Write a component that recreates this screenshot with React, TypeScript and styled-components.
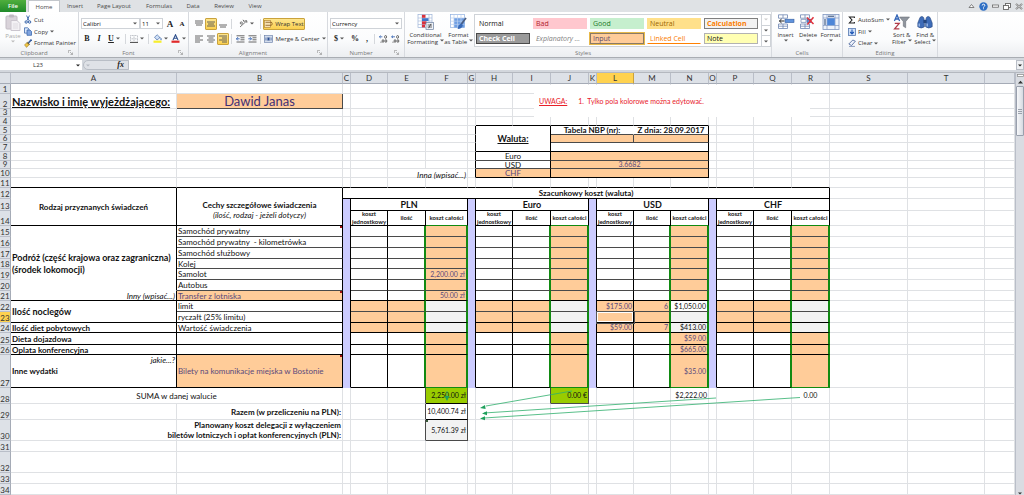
import React from "react";
import styled, { createGlobalStyle, css } from "styled-components";

const GlobalStyle = createGlobalStyle`
  * { box-sizing: border-box; }
  body { margin: 0; background: #fff; }
  button, input, select { font: inherit; color: inherit; margin: 0; padding: 0; border: 0; background: none; border-radius: 0; }
  select { appearance: none; outline: none; }
`;

const Page = styled.div`
  display: flex;
  flex-direction: column;
  min-height: 100vh;
  overflow: hidden;
  font-family: "Open Sans", "Noto Sans", sans-serif;
  font-size: 6px;
  line-height: 8px;
  color: #333;
`;

/* ---------- tab strip ---------- */

const TabStrip = styled.nav`
  display: flex;
  align-items: stretch;
  height: 12px;
  background: #dfe2e5;
`;

const Tab = styled.button<{ $w: number; $kind?: "file" | "active" }>`
  width: ${(p) => p.$w}px;
  text-align: center;
  color: #4a4a4a;
  ${(p) => p.$kind === "file" && css`
    background: linear-gradient(#4fae3d, #1f8a2a);
    color: #fff;
    font-weight: 600;
    margin-right: 2px;
  `}
  ${(p) => p.$kind === "active" && css`
    background: #fff;
    border: 1px solid #c3c7cc;
    border-bottom: 0;
  `}
`;

const WindowButtons = styled.div`
  display: flex;
  align-items: center;
  gap: 2px;
  margin-left: auto;
`;

const WindowButton = styled.button`
  width: 10px;
  height: 10px;
  display: grid;
  place-items: center;
`;

/* ---------- ribbon ---------- */

const Ribbon = styled.div`
  display: flex;
  height: 46px;
  background: linear-gradient(#fff, #fbfcfd 60%, #eceef1);
  border-bottom: 1px solid #a9adb3;
`;

const Group = styled.section<{ $w: number }>`
  display: flex;
  flex-direction: column;
  width: ${(p) => p.$w}px;
  flex: none;
  border-right: 1px solid #d7dadf;
`;

const GroupBody = styled.div<{ $inset?: number }>`
  display: flex;
  height: 37px;
  padding: 2px 0 0 ${(p) => p.$inset ?? 2}px;
`;

const GroupLabel = styled.div`
  display: grid;
  grid-template-columns: 1fr 10px;
  height: 8px;
  text-align: center;
  color: #777;
  svg { margin-top: 1px; }
`;

const Stack = styled.div<{ $pt?: number }>`
  display: flex;
  flex-direction: column;
  padding-top: ${(p) => p.$pt ?? 0}px;
`;

const ToolRow = styled.div`
  display: flex;
  align-items: center;
  height: 15px;
`;

const BigButton = styled.button<{ $w: number; $off?: boolean }>`
  width: ${(p) => p.$w}px;
  display: flex;
  flex-direction: column;
  align-items: center;
  line-height: 7px;
  white-space: nowrap;
  color: ${(p) => (p.$off ? "#aaa" : "#333")};
  svg { flex: none; margin-bottom: 2px; }
`;

const SmallButton = styled.button`
  display: flex;
  align-items: center;
  gap: 2px;
  height: 12px;
  white-space: nowrap;
`;

const Tool = styled.button<{ $w?: number; $on?: boolean }>`
  display: flex;
  align-items: center;
  justify-content: center;
  gap: 2px;
  width: ${(p) => p.$w ?? 12}px;
  height: 12px;
  white-space: nowrap;
  ${(p) => p.$on && css`
    background: linear-gradient(#fde58d, #fbd04f);
    border: 1px solid #c9a23c;
    border-radius: 1px;
  `}
`;

const Glyph = styled.span<{ $size?: number; $i?: boolean; $u?: boolean }>`
  font-family: "Liberation Serif", serif;
  font-size: ${(p) => p.$size ?? 8}px;
  font-weight: bold;
  color: #222;
  font-style: ${(p) => (p.$i ? "italic" : "normal")};
  text-decoration: ${(p) => (p.$u ? "underline" : "none")};
`;

const Sep = styled.i`
  width: 1px;
  height: 10px;
  margin: 0 2px;
  background: #d5d8dc;
`;

const Combo = styled.label<{ $w: number }>`
  display: flex;
  align-items: center;
  width: ${(p) => p.$w}px;
  height: 11px;
  padding: 0 2px 0 1px;
  border: 1px solid #cfd3d8;
  background: #fff;
  color: #111;
  select { flex: 1; min-width: 0; }
`;

const Gallery = styled.div`
  display: grid;
  grid-template-columns: repeat(5, 54px) 9px;
  grid-template-rows: 13px 13px;
  column-gap: 3px;
  row-gap: 2px;
  height: 33px;
  margin-left: 1px;
  padding: 2px 0 0 1px;
  border: 1px solid #cfd3d8;
  background: #fff;
  font-size: 7px;
  line-height: 9px;
`;

const StyleChip = styled.button<{ $bg: string; $fg: string; $bd?: string; $i?: boolean; $b?: boolean; $picked?: boolean; $under?: boolean }>`
  margin: 1px 0;
  padding: 0 2px;
  text-align: left;
  white-space: nowrap;
  background: ${(p) => p.$bg};
  color: ${(p) => p.$fg};
  border: 1px solid ${(p) => p.$bd ?? "transparent"};
  font-style: ${(p) => (p.$i ? "italic" : "normal")};
  font-weight: ${(p) => (p.$b ? "bold" : "normal")};
  ${(p) => p.$picked && css`box-shadow: 0 0 0 1px #e8b94a;`}
  ${(p) => p.$under && css`border-bottom: 1px solid #ff8001;`}
`;

const GalleryScroll = styled.div`
  grid-row: 1 / span 2;
  grid-column: 6;
  display: flex;
  flex-direction: column;
  margin: -2px 0 0;
  height: 31px;
  border-left: 1px solid #cfd3d8;
`;

const GalleryArrow = styled.button`
  flex: 1;
  display: grid;
  place-items: center;
  & + & { border-top: 1px solid #cfd3d8; }
`;

/* ---------- formula bar ---------- */

const FormulaBar = styled.div`
  display: flex;
  height: 15px;
  padding: 2px 0;
  background: #d3d7dd;
  border-bottom: 1px solid #b4b8bf;
`;

const NameBox = styled.label`
  display: flex;
  align-items: center;
  width: 82px;
  padding-right: 2px;
  background: #fff;
  input { flex: 1; min-width: 0; text-align: center; }
`;

const FxArea = styled.div`
  display: flex;
  align-items: center;
  justify-content: space-between;
  width: 46px;
  margin-left: 1px;
  padding: 0 4px 0 2px;
  border: 1px solid #b9bec6;
  border-radius: 6px 0 0 6px;
  background: #dfe2e7;
`;

const FormulaInput = styled.input`
  && { flex: 1; min-width: 0; background: #fff; }
`;

const ExpandButton = styled.button`
  && { width: 8px; background: #eef0f3; border: 1px solid #b9bec6; }
  display: grid;
  place-items: center;
`;

/* ---------- sheet ---------- */

const Workspace = styled.main`
  display: flex;
  flex: 1;
`;

const SheetArea = styled.div`
  position: relative;
  flex: 1;
  min-width: 0;
`;

const COLS = [166, 166, 8, 37, 38, 42, 8, 37, 38, 38, 8, 37, 37, 38, 8, 37, 38, 38, 78, 77];
const LETTERS = "ABCDEFGHIJKLMNOPQRST";
const HEIGHTS = [
  10, 15, 8, 9, 9, 8, 9, 9, 8, 9, 10, 11, 12, 15, 11, 11, 11, 10, 11, 11, 10, 11, 11, 10, 12, 10, 33, 16, 16, 21, 11,
  21, 11, 11,
];

const Table = styled.table`
  display: grid;
  grid-template-columns: 11px ${COLS.map((c) => c + "px").join(" ")} minmax(0, 1fr);
  grid-template-rows: 11px ${HEIGHTS.map((h) => h + "px").join(" ")};
  font-family: Lato, "Noto Sans", sans-serif;
  font-size: 8px;
  line-height: 10px;
  color: #111;
  thead, tbody, tr { display: contents; }
`;

const ColHead = styled.th<{ $on?: boolean }>`
  padding: 0;
  font-weight: normal;
  text-align: center;
  color: #333;
  background: ${(p) => (p.$on ? "#ffd24f" : "#dde1e7")};
  border-right: 1px solid ${(p) => (p.$on ? "#c9a23c" : "#b9bec8")};
  border-bottom: 1px solid #a5abb6;
`;

const RowHead = styled.th<{ $on?: boolean }>`
  display: flex;
  align-items: flex-end;
  justify-content: center;
  padding: 0;
  font-weight: normal;
  line-height: 8px;
  color: #333;
  background: ${(p) => (p.$on ? "#ffd24f" : "#dde1e7")};
  border-right: 1px solid #a5abb6;
  border-bottom: 1px solid #b9bec8;
`;

const LINE = { grid: "#dfe1e4", thin: "#4a4a4a", black: "#000", green: "#128a12", none: "transparent" };
const FILL = { peach: "#ffcc99", gray: "#f2f2f2", lime: "#99cc00", lilac: "#ccccff", white: "#fff" };
type Line = keyof typeof LINE;
type Fill = keyof typeof FILL;

interface CellStyle {
  fill?: Fill;
  r?: Line;
  b?: Line;
  align?: "left" | "center" | "right";
  valign?: "top" | "center" | "bottom";
  bold?: boolean;
  italic?: boolean;
  underline?: boolean;
  ink?: string;
  size?: number;
  mark?: string;
  picked?: boolean;
  over?: boolean;
  drop?: number;
}
interface CellData extends CellStyle {
  cs?: number;
  rs?: number;
  text?: React.ReactNode;
}

const FLEX = { left: "flex-start", center: "center", right: "flex-end", top: "flex-start", bottom: "flex-end" };
const thick = (l?: Line) => (l === "green" ? 2 : 1);

const Cell = styled.td<{ $s: CellStyle; $cs: number; $rs: number }>`
  position: relative;
  display: flex;
  grid-column: span ${(p) => p.$cs};
  grid-row: span ${(p) => p.$rs};
  justify-content: ${(p) => FLEX[p.$s.align ?? "left"]};
  align-items: ${(p) => FLEX[p.$s.valign ?? "center"]};
  text-align: ${(p) => p.$s.align ?? "left"};
  min-width: 0;
  padding: ${(p) => p.$s.drop ?? 0}px 1px 0;
  white-space: pre;
  background: ${(p) => FILL[p.$s.fill ?? "white"]};
  border-right: ${(p) => thick(p.$s.r)}px solid ${(p) => LINE[p.$s.r ?? "grid"]};
  border-bottom: 1px solid ${(p) => LINE[p.$s.b ?? "grid"]};
  font-size: ${(p) => p.$s.size ?? 8}px;
  line-height: ${(p) => (p.$s.size ?? 8) + 2}px;
  font-weight: ${(p) => (p.$s.bold ? "bold" : "normal")};
  font-style: ${(p) => (p.$s.italic ? "italic" : "normal")};
  text-decoration: ${(p) => (p.$s.underline ? "underline" : "none")};
  color: ${(p) => p.$s.ink ?? "#111"};
  ${(p) => p.$s.over && css`z-index: 1;`}
  ${(p) => p.$s.mark && css`
    &::after {
      content: "";
      position: absolute;
      top: 0;
      ${p.$s.align === "right" ? "left" : "right"}: 0;
      border: 1px solid ${p.$s.mark};
    }
  `}
  ${(p) => p.$s.picked && css`
    box-shadow: inset 0 0 0 1px #fff, 0 0 0 1px #555;
    z-index: 1;
  `}
`;

const Lines = styled.div<{ $lh: number }>`
  line-height: ${(p) => p.$lh}px;
`;

const Aside = styled.span`
  align-self: flex-start;
  margin-left: auto;
  font-weight: normal;
  font-style: italic;
`;

const Note = styled.aside`
  position: absolute;
  left: 534px;
  top: 12px;
  width: 276px;
  height: 32px;
  padding: 11px 5px 0;
  display: flex;
  gap: 11px;
  background: #fff;
  color: #e8202a;
  font-family: Lato, "Noto Sans", sans-serif;
  font-size: 7px;
  line-height: 10px;
  white-space: nowrap;
`;

const Arrows = styled.svg`
  position: absolute;
  left: 0;
  top: 0;
  z-index: 2;
  pointer-events: none;
`;

const Scrollbar = styled.div`
  display: flex;
  flex-direction: column;
  width: 9px;
  background: #d9dce2;
  border-left: 1px solid #b9bec8;
`;

const ScrollButton = styled.button<{ $h: number }>`
  height: ${(p) => p.$h}px;
  flex: none;
  display: grid;
  place-items: center;
`;

const ScrollThumb = styled.div`
  height: 50px;
  flex: none;
  display: grid;
  place-items: center;
  margin-bottom: auto;
  border: 1px solid #99a0ad;
  border-radius: 1px;
  background: linear-gradient(90deg, #f7f8fa, #d6dae1);
`;

/* ---------- icons ---------- */

const Caret = ({ c = "#555" }: { c?: string }) => (
  <svg width="4" height="3" viewBox="0 0 4 3"><path d="M0 0.5h4l-2 2z" fill={c} /></svg>
);
const Launcher = () => (
  <svg width="5" height="5" viewBox="0 0 5 5" fill="none" stroke="#999" strokeWidth="0.7"><path d="M0.4 3V0.4H3M2 2l2.4 2.4M4.5 2.5v2h-2" /></svg>
);
const CutIcon = () => (
  <svg width="8" height="9" viewBox="0 0 8 9" fill="none" stroke="#3562a8"><path d="M2.6 0.5l2.2 5M5.4 0.5l-2.2 5" strokeWidth="0.9" /><circle cx="2.2" cy="7" r="1.2" /><circle cx="5.6" cy="7" r="1.2" /></svg>
);
const CopyIcon = () => (
  <svg width="8" height="9" viewBox="0 0 8 9" stroke="#3d69ad" strokeWidth="0.8"><path d="M0.5 0.8h3.2l1.3 1.3v4H0.5z" fill="#dce8fa" /><path d="M3 3h3l1.5 1.5v3.8H3z" fill="#7fa4e0" /></svg>
);
const BrushIcon = () => (
  <svg width="8" height="9" viewBox="0 0 8 9"><path d="M7.5 0.5L4.2 4.2" stroke="#3b5f9e" strokeWidth="1.6" /><path d="M0.5 5.8L3.6 3.2 5.4 5.4 2.5 8.4z" fill="#f2c744" stroke="#8a6c1c" strokeWidth="0.5" /><path d="M3.2 3.6l2 2" stroke="#333" /></svg>
);
const PasteIcon = () => (
  <svg width="16" height="17" viewBox="0 0 16 17"><rect x="1" y="2" width="11" height="13" rx="1" fill="#d9d3da" stroke="#c2bcc4" /><rect x="4" y="0.5" width="5" height="3" rx="1" fill="#bdb8c0" /><path d="M6 6.5h6l3 3v7H6z" fill="#f3f1f5" stroke="#cbc6cf" /><path d="M8 10h5M8 12h5M8 14h5" stroke="#d6d1da" strokeWidth="0.7" /></svg>
);
const AlignIcon = ({ lines }: { lines: [number, number, number][] }) => (
  <svg width="8" height="8" viewBox="0 0 8 8" stroke="#555" strokeWidth="0.9">{lines.map(([x, l, y], i) => <path key={i} d={`M${x} ${y}h${l}`} />)}</svg>
);
const BordersIcon = () => (
  <svg width="8" height="8" viewBox="0 0 8 8" fill="none"><path d="M0.5 0.5h7v6M0.5 0.5v6M4 0.5v6M0.5 3.8h7" stroke="#a9adb5" strokeWidth="0.7" strokeDasharray="1 0.5" /><path d="M0 7.4h8" stroke="#444" /></svg>
);
const FillIcon = () => (
  <svg width="9" height="9" viewBox="0 0 9 9"><path d="M1.5 3.2L4.2 0.8 7 3.6 4 6z" fill="#cfe0f7" stroke="#4a6fa8" strokeWidth="0.7" /><path d="M7 3.4q1.6 1 1 2.8" stroke="#3562a8" fill="none" /><rect x="0.5" y="6.6" width="8" height="2.2" fill="#f7ee2e" /></svg>
);
const InkIcon = () => (
  <svg width="9" height="9" viewBox="0 0 9 9"><path d="M2 6L4.5 0.8 7 6M3 4.2h3" stroke="#2c4e8c" strokeWidth="1.1" fill="none" /><rect x="0.5" y="6.6" width="8" height="2.2" fill="#e02a2a" /></svg>
);
const OrientIcon = () => (
  <svg width="9" height="9" viewBox="0 0 9 9" fill="none" stroke="#555"><path d="M1 8L7.6 2M5.6 1.8h2.2v2" strokeWidth="0.8" /><circle cx="2.3" cy="4" r="1.1" strokeWidth="0.8" /><path d="M4 0.8L5.4 3" strokeWidth="0.9" /></svg>
);
const IndentIcon = ({ flip }: { flip?: boolean }) => (
  <svg width="9" height="8" viewBox="0 0 9 8" fill="none"><path d="M0.5 0.8h8M4.5 2.8h4M4.5 4.8h4M0.5 7h8" stroke="#555" strokeWidth="0.9" /><path d={flip ? "M0.3 3.8h3M2 2.2l1.6 1.6L2 5.4" : "M3.6 3.8h-3M1.9 2.2L0.3 3.8l1.6 1.6"} stroke="#2f5fb0" strokeWidth="0.9" /></svg>
);
const WrapIcon = () => (
  <svg width="9" height="8" viewBox="0 0 9 8" fill="none"><rect x="0.5" y="0.5" width="6" height="7" fill="#f7e3b2" stroke="#b58a3c" strokeWidth="0.7" /><path d="M1.5 2.3h6M1.5 5.3h5.5q1.2 0 1.2-1.5T7 2.4" stroke="#8a5a20" strokeWidth="0.8" /></svg>
);
const MergeIcon = () => (
  <svg width="9" height="8" viewBox="0 0 9 8"><rect x="0.5" y="0.5" width="8" height="7" fill="#e9f0fb" stroke="#7186ad" strokeWidth="0.7" /><path d="M0.5 2.2h8M0.5 5.8h8" stroke="#7186ad" strokeWidth="0.6" /><rect x="3.4" y="2.6" width="2.2" height="2.8" fill="#2a4d8f" /><path d="M0.9 4h2M6.2 4h2" stroke="#2a4d8f" strokeWidth="0.9" /></svg>
);
const DecimalIcon = ({ less }: { less?: boolean }) => (
  <svg width="9" height="8" viewBox="0 0 9 8" fill="none"><path d={less ? "M4 1.8H0.6M2 0.6L0.6 1.8 2 3" : "M0.4 1.8h3M1.7 0.6L0.4 1.8 1.7 3"} stroke="#2f5fb0" strokeWidth="0.8" /><ellipse cx="6.6" cy="1.9" rx="1" ry="1.4" stroke="#333" strokeWidth="0.7" /><ellipse cx="4" cy="6" rx="0.9" ry="1.4" stroke="#333" strokeWidth="0.7" /><ellipse cx="6.9" cy="6" rx="0.9" ry="1.4" stroke="#333" strokeWidth="0.7" /><path d="M1.6 7.2h0.8" stroke="#333" /></svg>
);
const CondIcon = () => (
  <svg width="17" height="16" viewBox="0 0 17 16"><rect x="1" y="0.5" width="14" height="13" fill="#fff" stroke="#9db4d8" strokeWidth="0.7" /><path d="M1 4h14M1 7h14M1 10.5h14M5 0.5v13M12 0.5v13" stroke="#9db4d8" strokeWidth="0.6" /><rect x="5" y="0.8" width="3.5" height="3" fill="#d8323e" /><rect x="5" y="4.2" width="6.5" height="2.8" fill="#3f74c8" /><rect x="5" y="7.3" width="4.5" height="3" fill="#d8323e" /><rect x="5" y="10.6" width="3" height="2.8" fill="#d8323e" /><rect x="9" y="8.5" width="7.5" height="7" fill="#eef2f8" stroke="#6c7f9e" strokeWidth="0.7" /><path d="M10.6 11h4.4M10.6 13h4.4M14 9.8l-2.4 4.4" stroke="#333" strokeWidth="0.7" /></svg>
);
const TableIcon = () => (
  <svg width="17" height="16" viewBox="0 0 17 16"><rect x="0.5" y="0.5" width="14" height="13" fill="#fff" stroke="#8fb0e0" strokeWidth="0.7" /><rect x="4" y="4" width="10.5" height="9.5" fill="#6f9fe3" /><path d="M0.5 4h14M0.5 7.2h14M0.5 10.4h14M4 0.5v13M7.5 0.5v13M11 0.5v13" stroke="#b9cfee" strokeWidth="0.7" /><path d="M16 4l-5 6.5" stroke="#4a5d80" strokeWidth="1.7" /><path d="M11.6 9.6q-3 0.5-4 5.4 4.6 0 5.2-4z" fill="#3768b5" /></svg>
);
const CellsIcon = ({ kind }: { kind: "insert" | "delete" | "format" }) => (
  <svg width="18" height="16" viewBox="0 0 18 16" fill="none">
    {kind === "format" ? (
      <><rect x="1" y="0.5" width="16" height="15" fill="#eef3fb" stroke="#8197c0" strokeWidth="0.8" /><path d="M1 4h16M1 11.5h16M5 0.5v15M13 0.5v15" stroke="#8197c0" strokeWidth="0.7" /><rect x="5.2" y="4.2" width="7.6" height="7" fill="#4d86d8" /><path d="M6 2.2h6M3 5v6" stroke="#26436f" /></>
    ) : (
      <><path d="M1.5 0.8h9v3.4h-9zM6 0.8v3.4M1.5 10h9v4.5h-9zM6 10v4.5M1.5 12.2h9" stroke="#6f86b3" strokeWidth="0.8" fill="#fff" /><rect x="8" y="5.2" width={kind === "insert" ? 9 : 4} height="3.4" fill="#5e92dc" stroke="#375f9f" strokeWidth="0.6" />
        {kind === "insert" ? <path d="M7.4 7H2.4M4.6 5L2.4 7l2.2 2" stroke="#222" /> : <><path d="M2 5.4h5v3H2z" stroke="#6f86b3" strokeWidth="0.7" /><path d="M8 3.5l6.5 6.5M14.5 3.2L8.4 10.4" stroke="#e0303a" strokeWidth="1.5" /></>}</>
    )}
  </svg>
);
const SigmaIcon = () => <svg width="8" height="8" viewBox="0 0 8 8" fill="none"><path d="M6.4 2V1H1.4l2.6 3-2.6 3h5V6" stroke="#222" strokeWidth="1.1" /></svg>;
const FillDownIcon = () => <svg width="8" height="8" viewBox="0 0 8 8" fill="none"><rect x="0.5" y="0.5" width="7" height="7" fill="#cfe0f8" stroke="#5578b0" strokeWidth="0.8" /><path d="M4 1.5v4.2M2.2 4L4 5.9 5.8 4" stroke="#1d55b5" strokeWidth="1.1" /></svg>;
const EraserIcon = () => <svg width="8" height="8" viewBox="0 0 8 8"><path d="M0.8 5L4.8 1l2.6 1.2-3.8 4.3z" fill="#eef2fb" stroke="#48639a" strokeWidth="0.8" /><path d="M1 7.4h6" stroke="#48639a" strokeWidth="0.6" /></svg>;
const SortIcon = () => (
  <svg width="17" height="16" viewBox="0 0 17 16" fill="none"><path d="M1.4 7L4 1l2.6 6M2.2 5h3.6" stroke="#2f62b5" strokeWidth="1.3" /><path d="M1.8 9.3h4.4l-4.6 5.5h4.8" stroke="#b03a48" strokeWidth="1.3" /><path d="M6.5 3h10l-3.8 4.6v6.2l-2.4-1.6V7.6z" fill="#8f959e" stroke="#5c626b" strokeWidth="0.5" /></svg>
);
const FindIcon = () => (
  <svg width="16" height="16" viewBox="0 0 16 16"><path d="M3 3.4q2-2 3.6 0l0.8 3v6.4q-3 2.4-6.6 0V9zM13 3.4q-2-2-3.6 0l-0.8 3v6.4q3 2.4 6.6 0V9z" fill="#3e6cb8" stroke="#26477f" strokeWidth="0.6" /><rect x="6.4" y="6" width="3.2" height="3" fill="#26477f" /><path d="M2.2 9.4v3M10.2 9.4v3" stroke="#a8c3ec" strokeWidth="1.2" /></svg>
);

/* ---------- sheet data ---------- */

const INPUT_INK = "#5a4a7c";
const COMMENT = "#a01010";
const NUM = 7;
const cells: Record<string, CellData> = {};
const put = (ref: string, data: CellData) => { cells[ref] = { ...cells[ref], ...data }; };

put("A2", { text: "Nazwisko i imię wyjeżdżającego:", bold: true, underline: true, size: 11 });
put("B2", { text: "Dawid Janas", fill: "peach", align: "center", size: 13, ink: "#3f2f76", r: "thin", b: "thin" });
for (const c of "ABCDEFGHIJKLMNOPQR") put(c + 11, { b: "black" });

put("E10", { cs: 2, text: "Inna (wpisać...)", italic: true, align: "right", valign: "top", over: true, drop: 1 });
for (const c of "HIJKLMN") put(c + 4, { b: "black" });
for (const r of [5, 6, 7, 8, 9, 10]) put("G" + r, { r: "black" });
put("H5", { cs: 2, rs: 3, text: "Waluta:", bold: true, underline: true, align: "center", size: 9, r: "black", b: "black" });
put("H8", { cs: 2, text: "Euro", align: "center", r: "black", b: "thin" });
put("H9", { cs: 2, text: "USD", align: "center", r: "black", b: "thin" });
put("H10", { cs: 2, text: "CHF", align: "center", fill: "peach", ink: INPUT_INK, r: "black", b: "black" });
put("J5", { cs: 3, text: "Tabela NBP (nr):", bold: true, align: "center", r: "none", b: "thin" });
put("M5", { cs: 2, text: "Z dnia: 28.09.2017", bold: true, align: "center", r: "black", b: "thin" });
put("J6", { cs: 3, fill: "peach", r: "thin", b: "thin" });
put("M6", { cs: 2, fill: "peach", r: "black", b: "thin" });
put("J7", { cs: 5, r: "black", b: "black" });
put("J8", { cs: 5, fill: "peach", r: "black", b: "thin" });
put("J9", { cs: 5, fill: "peach", r: "black", b: "thin", align: "center", ink: INPUT_INK, size: NUM, text: "3.6682" });
put("J10", { cs: 5, fill: "peach", r: "black", b: "black" });

put("A12", { rs: 3, text: "Rodzaj przyznanych świadczeń", bold: true, align: "center", r: "black", b: "black" });
put("B12", {
  rs: 3, bold: true, align: "center", r: "black", b: "black", drop: 6,
  text: <div>Cechy szczegółowe świadczenia<br /><Aside>(ilość, rodzaj - jeżeli dotyczy)</Aside></div>,
});
put("C12", { cs: 16, text: "Szacunkowy koszt (waluta)", bold: true, align: "center", r: "black", b: "black" });
for (const c of "CGKO") put(c + 13, { rs: 15, fill: "lilac", r: "black", b: "none" });

const blocks: [string, string][] = [["DEF", "PLN"], ["HIJ", "Euro"], ["LMN", "USD"], ["PQR", "CHF"]];
for (const [[u, q, t], name] of blocks) {
  put(u + 13, { cs: 3, text: name, bold: true, align: "center", size: 9, r: "black", b: "black" });
  put(u + 14, { text: <Lines $lh={8}>{"koszt\njednostkowy"}</Lines>, bold: true, size: 6, align: "center", r: "black", b: "black" });
  put(q + 14, { text: "ilość", bold: true, size: 6, align: "center", r: "black", b: "black" });
  put(t + 14, { text: "koszt całości", bold: true, size: 6, align: "center", r: "black", b: "green" });
  for (let r = 15; r <= 27; r++) {
    const b: Line = r >= 21 && r !== 22 ? "black" : "thin";
    const open = r >= 22 && r <= 24;
    const base: CellData = { align: "right", ink: INPUT_INK, size: NUM, b };
    put(u + r, { ...base, fill: open ? "peach" : "white", r: "black" });
    put(q + r, { ...base, fill: open ? "peach" : "white", r: "green" });
    put(t + r, { ...base, fill: open ? "gray" : "peach", r: "green", b: r === 27 ? "green" : b });
  }
}
put("F19", { text: "2,200.00 zł" });
put("F21", { text: "50.00 zł" });
put("L22", { text: "$175.00" });
put("M22", { text: "6" });
put("N22", { text: "$1,050.00", fill: "white", ink: "#111" });
put("L23", { picked: true });
put("L24", { text: "$59.00" });
put("M24", { text: "7" });
put("N24", { text: "$413.00", ink: "#111" });
put("N25", { text: "$59.00" });
put("N26", { text: "$665.00" });
put("N27", { text: "$35.00" });

put("A15", { rs: 6, text: <Lines $lh={12}>{"Podróż (część krajowa oraz zagraniczna)\n(środek lokomocji)"}</Lines>, bold: true, size: 9, drop: 11, r: "black", b: "none" });
put("A21", { text: "Inny (wpisać...)", italic: true, align: "right", r: "black", b: "black" });
["Samochód prywatny", "Samochód prywatny  - kilometrówka", "Samochód służbowy", "Kolej", "Samolot", "Autobus"].forEach((text, i) =>
  put("B" + (15 + i), { text, r: "black", b: "thin", mark: i === 0 ? COMMENT : undefined }),
);
put("B21", { text: "Transfer z lotniska", fill: "peach", ink: INPUT_INK, r: "black", b: "black", mark: COMMENT });
put("A22", { rs: 2, text: "Ilość noclegów", bold: true, size: 9, r: "black", b: "black" });
put("B22", { text: "limit", r: "black", b: "thin" });
put("B23", { text: "ryczałt (25% limitu)", r: "black", b: "black" });
put("A24", { text: "Ilość diet pobytowych", bold: true, r: "black", b: "black" });
put("B24", { text: "Wartość świadczenia", r: "black", b: "black" });
put("A25", { text: "Dieta dojazdowa", bold: true, r: "black", b: "black" });
put("B25", { r: "black", b: "black" });
put("A26", { text: "Oplata konferencyjna", bold: true, r: "black", b: "black" });
put("B26", { r: "black", b: "black" });
put("A27", { text: <>Inne wydatki<Aside>jakie...?</Aside></>, bold: true, r: "black", b: "black" });
put("B27", { text: "Bilety na komunikacje miejska w Bostonie", fill: "peach", ink: INPUT_INK, r: "black", b: "black", mark: COMMENT });
put("A28", { cs: 2, text: "SUMA w danej walucie", align: "center" });
put("B29", { text: "Razem (w przeliczeniu na PLN):", bold: true, align: "right" });
put("B30", { text: <Lines $lh={10}>{"Planowany koszt delegacji z wyłączeniem\nbiletów lotniczych i opłat konferencyjnych (PLN):"}</Lines>, bold: true, align: "right" });
for (const r of [28, 29, 30]) put("E" + r, { r: "thin" });
put("F28", { text: "2,250.00 zł", fill: "lime", align: "right", size: NUM, r: "thin", b: "black" });
put("F29", { text: "10,400.74 zł", align: "right", size: NUM, r: "thin", b: "black" });
put("F30", { text: "5,761.39 zł", fill: "gray", align: "right", size: NUM, r: "thin", b: "thin", mark: "#3a5a3a" });
put("I28", { r: "thin" });
put("J28", { text: "0.00 €", fill: "lime", align: "right", size: NUM, r: "thin", b: "thin" });
put("N28", { text: "$2,222.00", align: "right", size: NUM });
put("R28", { text: "0.00", align: "center", size: NUM });

const buildRows = () => {
  const covered = new Set<string>();
  return HEIGHTS.map((_, i) => {
    const row: { key: string; data: CellData }[] = [];
    for (let c = 0; c <= LETTERS.length; c++) {
      const key = (LETTERS[c] ?? "U") + (i + 1);
      if (covered.has(key)) continue;
      const data = cells[key] ?? {};
      for (let y = 0; y < (data.rs ?? 1); y++)
        for (let x = 0; x < (data.cs ?? 1); x++) covered.add((LETTERS[c + x] ?? "U") + (i + 1 + y));
      row.push({ key, data });
    }
    return row;
  });
};
const ROWS = buildRows();

const Sheet = () => (
  <Table>
    <thead>
      <tr>
        <ColHead aria-label="Corner" />
        {[...LETTERS].map((l) => <ColHead key={l} $on={l === "L"}>{l}</ColHead>)}
        <ColHead aria-label="U" />
      </tr>
    </thead>
    <tbody>
      {ROWS.map((row, i) => (
        <tr key={i}>
          <RowHead $on={i === 22}>{i + 1}</RowHead>
          {row.map(({ key, data: { cs = 1, rs = 1, text, ...s } }) => (
            <Cell key={key} $s={s} $cs={cs} $rs={rs} colSpan={cs} rowSpan={rs}>{text}</Cell>
          ))}
        </tr>
      ))}
    </tbody>
  </Table>
);

const CHIPS = [
  { t: "Normal", $bg: "#fff", $fg: "#111" },
  { t: "Bad", $bg: "#ffc7ce", $fg: "#b0202a" },
  { t: "Good", $bg: "#c6efce", $fg: "#1e7a2a" },
  { t: "Neutral", $bg: "#ffe08a", $fg: "#9c6500" },
  { t: "Calculation", $bg: "#f2f2f2", $fg: "#fa7d00", $bd: "#7f7f7f", $b: true },
  { t: "Check Cell", $bg: "#9a9a9a", $fg: "#fff", $bd: "#4a4a4a", $b: true },
  { t: "Explanatory ...", $bg: "#fff", $fg: "#7f7f7f", $i: true },
  { t: "Input", $bg: "#ffcc99", $fg: "#5a4a6c", $bd: "#8a7a66", $picked: true },
  { t: "Linked Cell", $bg: "#fff", $fg: "#fa7d00", $under: true },
  { t: "Note", $bg: "#ffffb3", $fg: "#111", $bd: "#b2b2b2" },
];

const Label = ({ children, launcher }: { children: string; launcher?: boolean }) => (
  <GroupLabel><span>{children}</span>{launcher && <Launcher />}</GroupLabel>
);

export default function App() {
  return (
    <Page>
      <GlobalStyle />
      <TabStrip>
        <Tab $w={26} $kind="file">File</Tab>
        <Tab $w={32} $kind="active">Home</Tab>
        <Tab $w={30}>Insert</Tab>
        <Tab $w={48}>Page Layout</Tab>
        <Tab $w={42}>Formulas</Tab>
        <Tab $w={26}>Data</Tab>
        <Tab $w={36}>Review</Tab>
        <Tab $w={26}>View</Tab>
        <WindowButtons>
          <WindowButton aria-label="Minimize ribbon"><svg width="7" height="6" viewBox="0 0 7 6"><path d="M1 4.5L3.5 1.5 6 4.5z" fill="#fff" stroke="#666" strokeWidth="0.8" /></svg></WindowButton>
          <WindowButton aria-label="Help"><svg width="9" height="9" viewBox="0 0 9 9"><circle cx="4.5" cy="4.5" r="4.2" fill="#2f6fc4" /><path d="M3.2 3.5q0-1.3 1.3-1.3t1.3 1.2q0 .8-1.3 1.6v.5M4.5 6.4v.8" stroke="#fff" fill="none" /></svg></WindowButton>
          <WindowButton aria-label="Minimize"><svg width="7" height="6" viewBox="0 0 7 6"><rect x="0.5" y="2" width="6" height="2.2" fill="#fff" stroke="#666" strokeWidth="0.8" /></svg></WindowButton>
          <WindowButton aria-label="Restore"><svg width="8" height="7" viewBox="0 0 8 7" fill="#fff" stroke="#666" strokeWidth="0.9"><rect x="2.5" y="0.5" width="5" height="4" /><rect x="0.5" y="2.5" width="5" height="4" /></svg></WindowButton>
          <WindowButton aria-label="Close"><svg width="8" height="7" viewBox="0 0 8 7" fill="none" stroke="#666"><path d="M1 0.8l6 5.4M7 0.8L1 6.2" strokeWidth="1.8" /><path d="M1 0.8l6 5.4M7 0.8L1 6.2" stroke="#fff" strokeWidth="0.7" /></svg></WindowButton>
        </WindowButtons>
      </TabStrip>

      <Ribbon>
        <Group $w={79}>
          <GroupBody>
            <BigButton $w={22} $off><PasteIcon />Paste<Caret c="#bbb" /></BigButton>
            <Stack>
              <SmallButton><CutIcon />Cut</SmallButton>
              <SmallButton><CopyIcon />Copy <Caret /></SmallButton>
              <SmallButton><BrushIcon />Format Painter</SmallButton>
            </Stack>
          </GroupBody>
          <Label launcher>Clipboard</Label>
        </Group>

        <Group $w={110}>
          <GroupBody>
            <Stack $pt={2}>
              <ToolRow>
                <Combo $w={59}><select aria-label="Font"><option>Calibri</option></select><Caret /></Combo>
                <Combo $w={23}><select aria-label="Font size"><option>11</option></select><Caret /></Combo>
                <Tool $w={14} aria-label="Grow font"><Glyph $size={9}>A</Glyph></Tool>
                <Tool $w={10} aria-label="Shrink font"><Glyph $size={7}>A</Glyph></Tool>
              </ToolRow>
              <ToolRow>
                <Tool><Glyph>B</Glyph></Tool>
                <Tool><Glyph $i>I</Glyph></Tool>
                <Tool $w={18}><Glyph $u>U</Glyph><Caret /></Tool>
                <Sep />
                <Tool $w={18} aria-label="Borders"><BordersIcon /><Caret /></Tool>
                <Sep />
                <Tool $w={18} aria-label="Fill color"><FillIcon /><Caret /></Tool>
                <Tool $w={18} aria-label="Font color"><InkIcon /><Caret /></Tool>
              </ToolRow>
            </Stack>
          </GroupBody>
          <Label launcher>Font</Label>
        </Group>

        <Group $w={139}>
          <GroupBody $inset={4}>
            <Stack $pt={2}>
              <ToolRow>
                <Tool aria-label="Top align"><AlignIcon lines={[[0, 8, 1], [0, 8, 3], [1, 6, 5]]} /></Tool>
                <Tool $on aria-label="Middle align"><AlignIcon lines={[[0, 8, 2], [1, 6, 4], [0, 8, 6]]} /></Tool>
                <Tool aria-label="Bottom align"><AlignIcon lines={[[0, 8, 5], [1, 6, 7]]} /></Tool>
                <Sep />
                <Tool $w={24} aria-label="Orientation"><OrientIcon /><Caret /></Tool>
                <Sep />
                <Tool $w={42} $on><WrapIcon />Wrap Text</Tool>
              </ToolRow>
              <ToolRow>
                <Tool aria-label="Align left"><AlignIcon lines={[[0, 8, 1], [0, 5, 3], [0, 8, 5], [0, 5, 7]]} /></Tool>
                <Tool aria-label="Center"><AlignIcon lines={[[0, 8, 1], [1.5, 5, 3], [0, 8, 5], [1.5, 5, 7]]} /></Tool>
                <Tool $on aria-label="Align right"><AlignIcon lines={[[0, 8, 1], [3, 5, 3], [0, 8, 5], [3, 5, 7]]} /></Tool>
                <Sep />
                <Tool aria-label="Decrease indent"><IndentIcon /></Tool>
                <Tool aria-label="Increase indent"><IndentIcon flip /></Tool>
                <Sep />
                <Tool $w={64}><MergeIcon />Merge &amp; Center <Caret /></Tool>
              </ToolRow>
            </Stack>
          </GroupBody>
          <Label launcher>Alignment</Label>
        </Group>

        <Group $w={77}>
          <GroupBody>
            <Stack $pt={2}>
              <ToolRow><Combo $w={72}><select aria-label="Number format"><option>Currency</option></select><Caret /></Combo></ToolRow>
              <ToolRow>
                <Tool $w={18}><Glyph>$</Glyph><Caret /></Tool>
                <Tool $w={14}><Glyph>%</Glyph></Tool>
                <Tool $w={10}><Glyph>,</Glyph></Tool>
                <Sep />
                <Tool aria-label="Increase decimal"><DecimalIcon /></Tool>
                <Tool aria-label="Decrease decimal"><DecimalIcon less /></Tool>
              </ToolRow>
            </Stack>
          </GroupBody>
          <Label launcher>Number</Label>
        </Group>

        <Group $w={367}>
          <GroupBody>
            <BigButton $w={38}><CondIcon />Conditional<span>Formatting <Caret /></span></BigButton>
            <BigButton $w={30}><TableIcon />Format<span>as Table <Caret /></span></BigButton>
            <Gallery>
              {CHIPS.map(({ t, ...chip }) => <StyleChip key={t} {...chip}>{t}</StyleChip>)}
              <GalleryScroll>
                <GalleryArrow aria-label="Previous styles"><Caret c="#ccc" /></GalleryArrow>
                <GalleryArrow aria-label="Next styles"><Caret /></GalleryArrow>
                <GalleryArrow aria-label="More styles"><Caret /></GalleryArrow>
              </GalleryScroll>
            </Gallery>
          </GroupBody>
          <Label>Styles</Label>
        </Group>

        <Group $w={71}>
          <GroupBody>
            <BigButton $w={23}><CellsIcon kind="insert" />Insert<Caret /></BigButton>
            <BigButton $w={22}><CellsIcon kind="delete" />Delete<Caret /></BigButton>
            <BigButton $w={23}><CellsIcon kind="format" />Format<Caret /></BigButton>
          </GroupBody>
          <Label>Cells</Label>
        </Group>

        <Group $w={95}>
          <GroupBody $inset={5}>
            <Stack>
              <SmallButton><SigmaIcon />AutoSum <Caret /></SmallButton>
              <SmallButton><FillDownIcon />Fill <Caret /></SmallButton>
              <SmallButton><EraserIcon />Clear <Caret /></SmallButton>
            </Stack>
            <BigButton $w={24}><SortIcon />Sort &amp;<span>Filter <Caret /></span></BigButton>
            <BigButton $w={23}><FindIcon />Find &amp;<span>Select <Caret /></span></BigButton>
          </GroupBody>
          <Label>Editing</Label>
        </Group>
      </Ribbon>

      <FormulaBar>
        <NameBox><input aria-label="Name box" defaultValue="L23" /><Caret c="#222" /></NameBox>
        <FxArea><Caret c="#b5bac2" /><Glyph $i>fx</Glyph></FxArea>
        <FormulaInput aria-label="Formula" />
        <ExpandButton aria-label="Expand formula bar"><Caret c="#222" /></ExpandButton>
      </FormulaBar>

      <Workspace>
        <SheetArea>
          <Sheet />
          <Note><u>UWAGA:</u><span>1.&nbsp; Tylko pola kolorowe można edytować.</span></Note>
          <Arrows width="830" height="422" viewBox="0 73 830 422" fill="none" stroke="#2fae6c" strokeWidth="0.8">
            <path d="M572 391L486 406M716 398L484 413M800 397.500L484 418M447 391v8" />
            <path d="M480 408l5-3 .6 4zM482 413.500l5-2.200v4zM480 418.500l5-2.200v4zM444.500 396h5l-2.500 5z" fill="#1fa05c" stroke="none" />
          </Arrows>
        </SheetArea>
        <Scrollbar>
          <ScrollButton $h={4} aria-label="Split"><svg width="7" height="3" viewBox="0 0 7 3"><rect x="0.5" y="0.5" width="6" height="2" fill="#fff" stroke="#888" strokeWidth="0.7" /></svg></ScrollButton>
          <ScrollButton $h={9} aria-label="Scroll up"><svg width="5" height="4" viewBox="0 0 5 4"><path d="M0 3.500h5L2.500 0.800z" fill="#333" /></svg></ScrollButton>
          <ScrollThumb><svg width="4" height="5" viewBox="0 0 4 5"><path d="M0 0.500h4M0 2.500h4M0 4.500h4" stroke="#888f9c" strokeWidth="0.8" /></svg></ScrollThumb>
          <ScrollButton $h={4} aria-label="Scroll down"><Caret c="#333" /></ScrollButton>
        </Scrollbar>
      </Workspace>
    </Page>
  );
}
